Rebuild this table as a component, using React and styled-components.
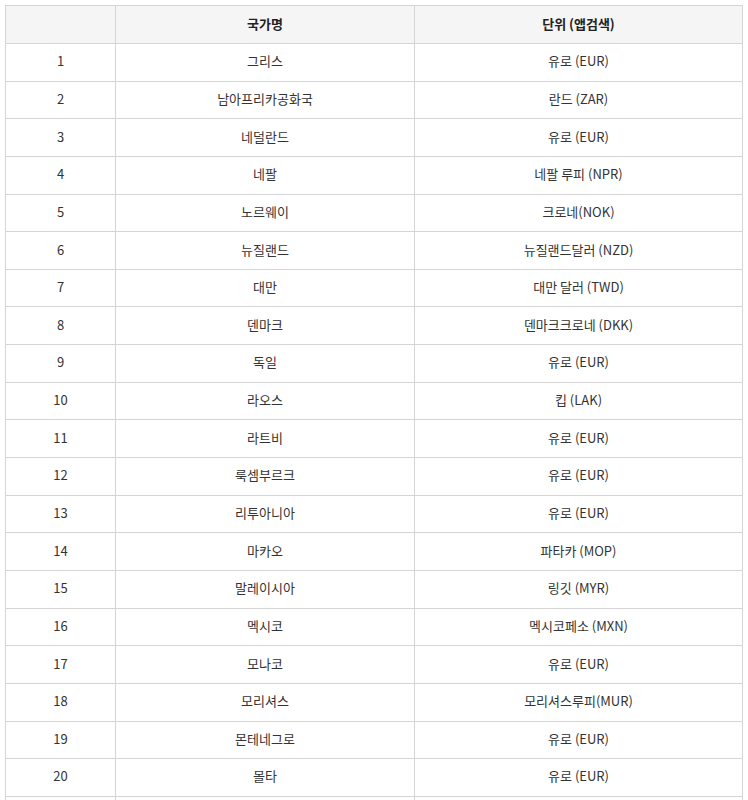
import React from "react";
import styled, { createGlobalStyle } from "styled-components";

const Global = createGlobalStyle`
  body {
    margin: 0;
    background: #fff;
    font-family: "Noto Sans CJK KR", "Noto Sans", sans-serif;
    color: #333;
  }
`;

const Wrap = styled.div`
  padding: 5px 5px 0 5px;
`;

const Table = styled.table`
  width: 738px;
  border-collapse: collapse;
  table-layout: fixed;
  font-size: 13px;
`;

const Th = styled.th`
  background: #f5f5f5;
  border: 1px solid #d5d5d5;
  font-weight: 700;
  color: #222;
  height: 38px;
  padding: 0 10px 2px;
  line-height: 18px;
  text-align: center;
  box-sizing: border-box;
`;

const Td = styled.td`
  border: 1px solid #d5d5d5;
  height: 37.65px;
  padding: 0 10px 2px;
  line-height: 18px;
  text-align: center;
  color: #333;
  box-sizing: border-box;
`;

const rows = [
  ["그리스", "유로 (EUR)"],
  ["남아프리카공화국", "란드 (ZAR)"],
  ["네덜란드", "유로 (EUR)"],
  ["네팔", "네팔 루피 (NPR)"],
  ["노르웨이", "크로네(NOK)"],
  ["뉴질랜드", "뉴질랜드달러 (NZD)"],
  ["대만", "대만 달러 (TWD)"],
  ["덴마크", "덴마크크로네 (DKK)"],
  ["독일", "유로 (EUR)"],
  ["라오스", "킵 (LAK)"],
  ["라트비", "유로 (EUR)"],
  ["룩셈부르크", "유로 (EUR)"],
  ["리투아니아", "유로 (EUR)"],
  ["마카오", "파타카 (MOP)"],
  ["말레이시아", "링깃 (MYR)"],
  ["멕시코", "멕시코페소 (MXN)"],
  ["모나코", "유로 (EUR)"],
  ["모리셔스", "모리셔스루피(MUR)"],
  ["몬테네그로", "유로 (EUR)"],
  ["몰타", "유로 (EUR)"],
  ["몰디브", "루피야 (MVR)"],
];

export default function App() {
  return (
    <Wrap>
      <Global />
      <Table>
        <colgroup>
          <col style={{ width: "110px" }} />
          <col style={{ width: "299px" }} />
          <col />
        </colgroup>
        <thead>
          <tr>
            <Th></Th>
            <Th>국가명</Th>
            <Th>단위 (앱검색)</Th>
          </tr>
        </thead>
        <tbody>
          {rows.map(([c, u], i) => (
            <tr key={i}>
              <Td>{i + 1}</Td>
              <Td>{c}</Td>
              <Td>{u}</Td>
            </tr>
          ))}
        </tbody>
      </Table>
    </Wrap>
  );
}
